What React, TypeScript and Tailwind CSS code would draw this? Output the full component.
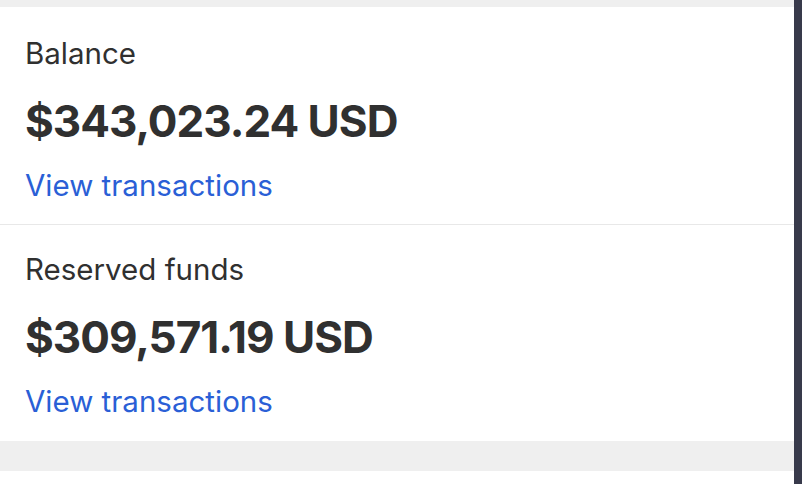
import React from "react";

function Section({ label, amount, top }: { label: string; amount: string; top: string }) {
  return (
    <div className={`flex flex-col pl-[25px] ${top}`}>
      <div className="text-[29.5px] leading-[34px] text-[#303030]">{label}</div>
      <div className="mt-[26px] text-[44px] leading-[50px] font-bold tracking-[-1px] text-[#303030]">{amount}</div>
      <a className="mt-[22px] text-[29.5px] leading-[34px] text-[#2a5fd6]">View transactions</a>
    </div>
  );
}

export default function App() {
  return (
    <div className="flex h-[484px] w-[802px] bg-white" style={{ fontFamily: "Inter, 'Noto Sans', sans-serif" }}>
      <div className="flex flex-1 flex-col">
        <div className="h-[7px] bg-[#efefef]" />
        <div className="flex h-[434px] flex-col bg-white">
          <div className="h-[217px]">
            <Section label="Balance" amount="$343,023.24 USD" top="pt-[29px]" />
          </div>
          <div className="h-px bg-[#e8e8e8]" />
          <div className="h-[216px]">
            <Section label="Reserved funds" amount="$309,571.19 USD" top="pt-[27px]" />
          </div>
        </div>
        <div className="h-[30px] bg-[#efefef]" />
        <div className="flex-1 bg-white" />
      </div>
      <div className="w-[8px] bg-[#383a4b]" />
    </div>
  );
}
